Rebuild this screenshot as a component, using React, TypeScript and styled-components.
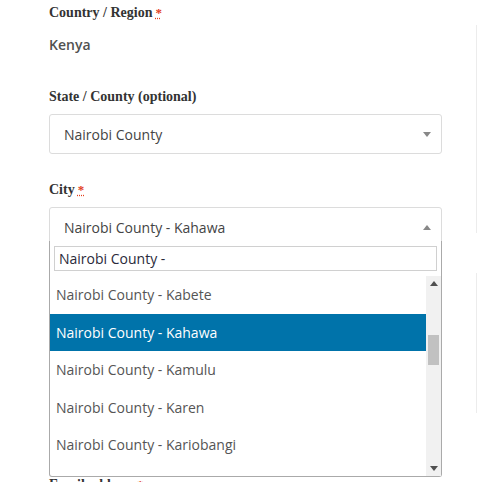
import React from "react";
import styled, { createGlobalStyle } from "styled-components";

const Global = createGlobalStyle`
  html, body { margin: 0; padding: 0; background: #fff; }
  body { font-family: "Open Sans", "Liberation Sans", sans-serif; overflow: hidden; }
  * { box-sizing: border-box; }
`;

const Page = styled.div`
  display: flex;
  width: 477px;
  height: 482px;
  overflow: hidden;
`;

const Main = styled.div`
  width: 476px;
  padding: 0 34px 0 49px;
  flex-shrink: 0;
`;

const Sidebar = styled.div`
  display: flex;
  flex-direction: column;
  flex: 1;
  padding-top: 25px;
  gap: 40px;
`;

const SideBox = styled.div<{ $h: number }>`
  height: ${(p) => p.$h}px;
  border-left: 1px solid #ececec;
`;

const Field = styled.div<{ $gap?: number }>`
  margin-top: ${(p) => (p.$gap ?? 25)}px;
  position: relative;
`;

const Label = styled.label`
  display: block;
  font-family: "Liberation Serif", "DejaVu Serif", serif;
  font-weight: 700;
  font-size: 14px;
  line-height: 20px;
  color: #333;
  margin-bottom: 7px;
`;

const Req = styled.abbr`
  color: #e2401c;
  font-weight: 700;
  font-size: 13px;
  text-decoration: underline dotted #e2401c;
  margin-left: 3px;
`;

const StaticValue = styled.div`
  font-size: 14px;
  font-weight: 600;
  line-height: 22px;
  color: #515151;
  margin-top: 11px;
  margin-bottom: 31px;
`;

const SelectBox = styled.div<{ $open?: boolean }>`
  display: flex;
  align-items: center;
  justify-content: space-between;
  height: 40px;
  padding: 0 10px 0 14px;
  border: 1px solid #dcdcdc;
  border-radius: ${(p) => (p.$open ? "3px 3px 0 0" : "3px")};
  background: #fff;
  font-size: 14px;
  color: #444;
`;

const Arrow = styled.span<{ $up?: boolean; $color?: string }>`
  width: 0;
  height: 0;
  border-left: 4px solid transparent;
  border-right: 4px solid transparent;
  ${(p) =>
    p.$up
      ? `border-bottom: 5px solid ${p.$color ?? "#888"};`
      : `border-top: 5px solid ${p.$color ?? "#888"};`}
`;

const Input = styled.div`
  height: 40px;
  border: 1px solid #dcdcdc;
  border-radius: 3px;
  & + & { margin-top: 10px; }
`;

const Dropdown = styled.div`
  position: absolute;
  left: 0;
  right: 0;
  top: 61px;
  z-index: 5;
  background: #fff;
  border: 1px solid #aaa;
  border-top: none;
  border-radius: 0 0 3px 3px;
  display: flex;
  flex-direction: column;
`;

const SearchWrap = styled.div`
  padding: 5px 4px;
`;

const Search = styled.div`
  height: 25px;
  border: 1px solid #d0d0d0;
  padding: 0 4px;
  display: flex;
  align-items: center;
  font-family: "Open Sans", sans-serif;
  font-size: 14px;
  color: #2a2a3a;
`;

const ResultsRow = styled.div`
  display: flex;
  height: 200px;
`;

const Results = styled.ul`
  list-style: none;
  margin: 0;
  padding: 0;
  flex: 1;
  overflow: hidden;
`;

const Option = styled.li<{ $active?: boolean }>`
  height: 37.5px;
  display: flex;
  align-items: center;
  padding: 0 6px;
  font-size: 14px;
  color: ${(p) => (p.$active ? "#fff" : "#555")};
  background: ${(p) => (p.$active ? "#0073aa" : "transparent")};
`;

const Scrollbar = styled.div`
  width: 15px;
  background: #f1f1f1;
  display: flex;
  flex-direction: column;
`;

const ScrollBtn = styled.div`
  height: 15px;
  display: flex;
  align-items: center;
  justify-content: center;
`;

const Track = styled.div`
  flex: 1;
  padding: 44px 2px 0 2px;
`;

const Thumb = styled.div`
  height: 30px;
  background: #c1c1c1;
`;

const options = [
  "Nairobi County - Kabete",
  "Nairobi County - Kahawa",
  "Nairobi County - Kamulu",
  "Nairobi County - Karen",
  "Nairobi County - Kariobangi",
  "Nairobi County - Kariokor",
];

export default function App() {
  return (
    <Page>
      <Global />
      <Main>
        <Field $gap={3}>
          <Label>
            Country / Region<Req title="required">*</Req>
          </Label>
          <StaticValue>Kenya</StaticValue>
        </Field>
        <Field $gap={0}>
          <Label>State / County (optional)</Label>
          <SelectBox>
            <span>Nairobi County</span>
            <Arrow />
          </SelectBox>
        </Field>
        <Field $gap={26}>
          <Label>
            City<Req title="required">*</Req>
          </Label>
          <SelectBox $open>
            <span>Nairobi County - Kahawa</span>
            <Arrow $up />
          </SelectBox>
          <Dropdown>
            <SearchWrap>
              <Search>Nairobi County -</Search>
            </SearchWrap>
            <ResultsRow>
              <Results>
                {options.map((o) => (
                  <Option key={o} $active={o.endsWith("Kahawa")}>
                    {o}
                  </Option>
                ))}
              </Results>
              <Scrollbar>
                <ScrollBtn>
                  <Arrow $up $color="#505050" />
                </ScrollBtn>
                <Track>
                  <Thumb />
                </Track>
                <ScrollBtn>
                  <Arrow $color="#505050" />
                </ScrollBtn>
              </Scrollbar>
            </ResultsRow>
          </Dropdown>
        </Field>
        <Field>
          <Label>
            Street address<Req title="required">*</Req>
          </Label>
          <Input />
          <Input />
        </Field>
        <Field $gap={86}>
          <Label>
            Email address<Req title="required">*</Req>
          </Label>
          <Input />
        </Field>
      </Main>
      <Sidebar>
        <SideBox $h={208} />
        <SideBox $h={140} />
      </Sidebar>
    </Page>
  );
}
